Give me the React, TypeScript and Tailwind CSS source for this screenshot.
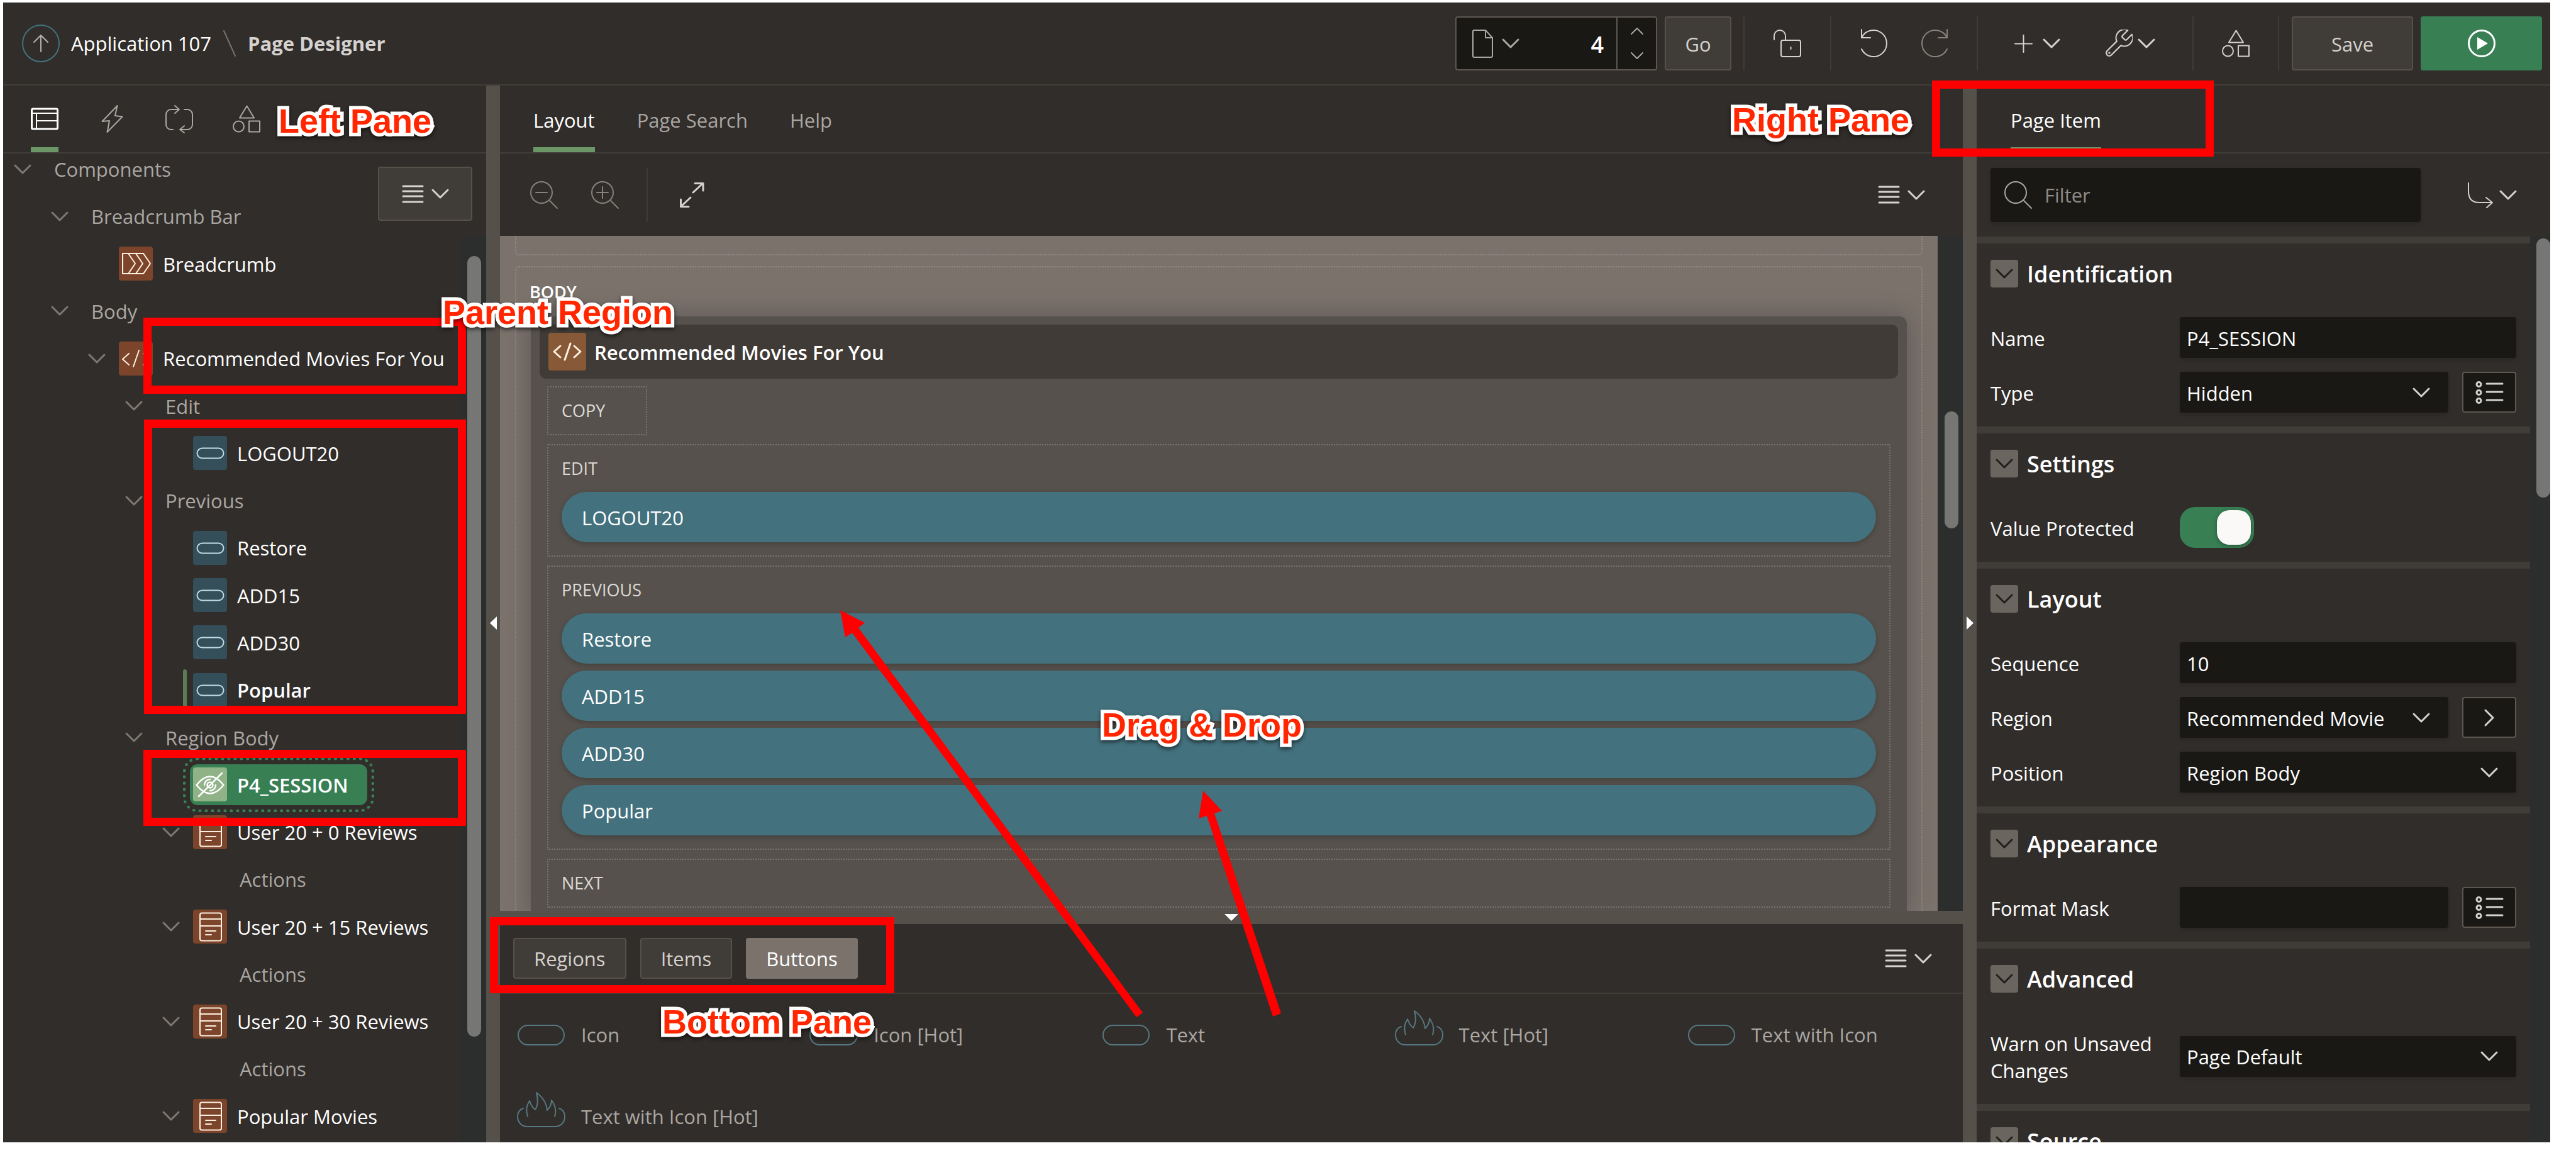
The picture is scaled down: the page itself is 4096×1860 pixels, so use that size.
import type { ReactNode } from "react";

/* ---------- icons ---------- */

type IconProps = { className?: string };

function Glyph({ w = 44, h = 44, sw = 2, className = "", children }: { w?: number; h?: number; sw?: number; className?: string; children: ReactNode }) {
  return (
    <svg width={w} height={h} viewBox={`0 0 ${w} ${h}`} fill="none" stroke="currentColor" strokeWidth={sw} strokeLinecap="round" strokeLinejoin="round" aria-hidden="true" className={`shrink-0 overflow-visible ${className}`}>
      {children}
    </svg>
  );
}

const Chevron = ({ className }: IconProps) => (
  <Glyph w={26} h={14} sw={3} className={className}><path d="M1 1l12 12L25 1" /></Glyph>
);
const SmallChevron = ({ up }: { up?: boolean }) => (
  <Glyph w={20} h={10} sw={2}><path d={up ? "M1 9l9-9 9 9" : "M1 1l9 9 9-9"} /></Glyph>
);
const ShapesIcon = ({ className }: IconProps) => (
  <Glyph className={className}>
    <path d="M22.500 1.500L11 20.500h23z" />
    <circle cx="9.500" cy="34" r="8.500" />
    <path d="M26 25.500h17v17H26z" />
  </Glyph>
);
const MenuIcon = () => (
  <span className="flex items-center gap-[14px]">
    <Glyph w={33} h={29} sw={3}><path d="M1 2h31M1 10h31M1 18h31M1 27h31" /></Glyph>
    <Chevron />
  </span>
);
const SearchGlyph = ({ kind, className }: { kind?: "in" | "out"; className?: string }) => (
  <Glyph className={className}>
    <circle cx="18" cy="18" r="17" />
    <path d="M31 31l12 12" />
    {kind && <path d="M9 18h18" />}
    {kind === "in" && <path d="M18 9v18" />}
  </Glyph>
);
const ListIcon = () => (
  <Glyph w={44} h={38} sw={3}>
    <circle cx="5.500" cy="6" r="3.500" /><circle cx="5.500" cy="19" r="3.500" /><circle cx="5.500" cy="32" r="3.500" />
    <path d="M18 5h25M18 18h25M18 31h25" />
  </Glyph>
);

type NodeKind = "breadcrumb" | "code" | "button" | "card" | "hidden";

const nodeTile: Record<NodeKind, string> = {
  breadcrumb: "bg-[#7c452b] text-[#fdf0e2]",
  code: "bg-[#7c452b] text-[#fdf0e2]",
  button: "bg-[#344f59] text-[#c3dde5]",
  card: "bg-[#7c452b] text-[#fdf0e2]",
  hidden: "bg-[#8fb287] text-white",
};

function NodeIcon({ kind }: { kind: NodeKind }) {
  return (
    <span className={`flex size-[54px] shrink-0 rounded-[4px] ${nodeTile[kind]}`}>
      <Glyph w={54} h={54} sw={kind === "hidden" ? 2.5 : 2}>
        {kind === "breadcrumb" && <path d="M6 11h33l11 16-11 16H6zM15 11l11 16-11 16M27 11l11 16-11 16" />}
        {kind === "code" && <path d="M16 19l-10 9 10 9M32 14l-9 26M39 19l10 9-10 9" />}
        {kind === "button" && <rect x="6.500" y="19.500" width="42" height="16" rx="8" />}
        {kind === "card" && <path d="M14 5.500h28a3 3 0 0 1 3 3v38a3 3 0 0 1-3 3H14a3 3 0 0 1-3-3v-38a3 3 0 0 1 3-3zM11 15h34M11 26h34M20 34h16M20 40h9" />}
        {kind === "hidden" && (
          <>
            <path d="M5.500 28Q27 1 48.500 28Q27 55 5.500 28z" />
            <path d="M46 9L9 46" />
            <circle cx="27" cy="28" r="4.500" />
            <path d="M18 28a9 9 0 0 1 9-9M36 28a9 9 0 0 1-9 9" />
          </>
        )}
      </Glyph>
    </span>
  );
}

function PaletteIcon({ hot }: { hot: boolean }) {
  return (
    <Glyph w={75} h={33} sw={2} className="text-[#557780]">
      {hot ? (
        <>
          <path d="M9 3C3 5 0 10 0 16c0 10 7 16 16 16h43c9 0 16-6 16-16 0-6-3-11-9-13" />
          <path d="M16 16C13 5 14-1 19-9c2 6 5 11 9 14 5-7 4-19 2-27 11 8 16 18 17 28 4-4 7-10 7-16 6 9 8 16 5 26" />
        </>
      ) : (
        <rect x="1" y="1" width="73" height="31" rx="15.500" />
      )}
    </Glyph>
  );
}

/* ---------- header ---------- */

const Rule = ({ className = "" }: { className?: string }) => <span className={`h-[86px] w-[2px] shrink-0 bg-[#403b37] ${className}`} />;

function Header() {
  return (
    <header className="flex h-[132px] shrink-0 items-center border-b-2 border-[#403c38] pl-[30px] pr-[13px]">
      <button aria-label="Up" className="flex size-[60px] items-center justify-center rounded-full border-2 border-[#43727f] text-[#b4b0ac]">
        <Glyph w={24} h={28}><path d="M12 27V1M1 12L12 1l11 11" /></Glyph>
      </button>
      <nav className="ml-[18px] flex items-center" aria-label="Breadcrumb">
        <a href="#app" className="font-medium text-white">Application 107</a>
        <Glyph w={20} h={42} className="mx-[19px] text-[#77726e]"><path d="M1 1l18 40" /></Glyph>
        <span className="font-bold text-[#d4d1ce]">Page Designer</span>
      </nav>
      <div className="ml-auto flex items-center text-[#d4d1ce]">
        <div className="flex h-[86px] w-[321px] items-center rounded-[4px] border-2 border-[#5d5752] bg-[#191815]">
          <button aria-label="Page finder" className="flex items-center gap-[15px] pl-[25px] text-[#aaa6a2]">
            <Glyph w={33} h={45}><path d="M3 1h18l11 12v29a2 2 0 0 1-2 2H3a2 2 0 0 1-2-2V3a2 2 0 0 1 2-2zM21 1v12h11" /></Glyph>
            <Chevron />
          </button>
          <input aria-label="Page number" defaultValue="4" className="h-full min-w-0 flex-1 bg-transparent pr-[20px] pt-[2px] text-right text-[36px] font-semibold text-white" />
          <div className="flex h-full w-[63px] flex-col items-center justify-center gap-[28px] border-l-2 border-[#5d5752] text-[#aaa6a2]">
            <button aria-label="Next page"><SmallChevron up /></button>
            <button aria-label="Previous page"><SmallChevron /></button>
          </div>
        </div>
        <button className="ml-[12px] h-[86px] w-[106px] rounded-[4px] border-2 border-[#56504b] bg-[#403c37] pt-[3px] font-medium">Go</button>
        <Rule className="ml-[19px]" />
        <button aria-label="Lock" className="mx-[46px]">
          <Glyph><rect x="12" y="17" width="31" height="26" rx="3" /><path d="M1 16V10a9 9 0 0 1 18 0v7M27.500 28v3" /></Glyph>
        </button>
        <Rule />
        <button aria-label="Undo" className="ml-[47px]"><Glyph w={43}><path d="M1 0v13h14M1 13A21 21 0 1 1 1 31" /></Glyph></button>
        <button aria-label="Redo" className="ml-[52px] text-[#87827d]"><Glyph w={43}><path d="M42 0v13H28M42 13A21 21 0 1 0 42 31" /></Glyph></button>
        <Rule className="ml-[46px]" />
        <button aria-label="Create" className="ml-[59px] flex items-center gap-[18px]">
          <Glyph w={27} h={27}><path d="M13.500 0v27M0 13.500h27" /></Glyph><Chevron />
        </button>
        <button aria-label="Utilities" className="ml-[72px] flex items-center gap-[9px]">
          <svg width="44" height="44" viewBox="2.200 2 19.600 20" fill="none" stroke="currentColor" strokeWidth="1" strokeLinejoin="round" aria-hidden="true">
            <path d="M14.700 6.300a1 1 0 0 0 0 1.400l1.600 1.600a1 1 0 0 0 1.400 0l3.770-3.770a6 6 0 0 1-7.940 7.940l-6.910 6.910a2.120 2.120 0 0 1-3-3l6.910-6.910a6 6 0 0 1 7.940-7.940l-3.760 3.760z" />
            <circle cx="5.200" cy="18.800" r=".3" />
          </svg>
          <Chevron />
        </button>
        <Rule className="ml-[60px]" />
        <button aria-label="Shared components" className="mx-[45px]"><ShapesIcon /></button>
        <Rule />
        <button className="ml-[20px] h-[86px] w-[193px] rounded-[4px] border-2 border-[#56504b] bg-[#403c37] pt-[3px] font-medium">Save</button>
        <button aria-label="Run page" className="ml-[12px] flex h-[86px] w-[193px] items-center justify-center rounded-[4px] bg-[#387f54] text-white">
          <Glyph sw={3}><circle cx="22" cy="22" r="20.500" /><path d="M15 12v20l17-10z" fill="currentColor" stroke="none" /></Glyph>
        </button>
      </div>
    </header>
  );
}

/* ---------- shared panes ---------- */

function TabStrip({ children, className = "" }: { children: ReactNode; className?: string }) {
  return <div role="tablist" className={`flex h-[108px] shrink-0 border-b-2 border-[#403c38] ${className}`}>{children}</div>;
}
function Tab({ active, label, children }: { active?: boolean; label?: string; children: ReactNode }) {
  return (
    <button role="tab" aria-selected={!!active} aria-label={label} className={active ? "flex items-center border-b-8 border-[#6b9766] pt-[8px] font-medium text-white" : "flex items-center text-[#aaa6a2]"}>
      {label ? children : <span className="pt-[5px]">{children}</span>}
    </button>
  );
}
function Splitter({ side }: { side: "left" | "right" }) {
  return (
    <div className="flex w-[22px] shrink-0 items-center justify-center bg-[#56504b]">
      <svg width="11" height="21" viewBox="0 0 11 21" className="mb-[-28px] fill-white" aria-hidden="true">
        <path d={side === "left" ? "M11 0v21L0 10.500z" : "M0 0v21l11-10.500z"} />
      </svg>
    </div>
  );
}

/* ---------- left pane ---------- */

type TreeNode = { label: string; level: number; kind?: NodeKind; leaf?: boolean; state?: "selected" | "marked" };

const tree: TreeNode[] = [
  { label: "Components", level: 0 },
  { label: "Breadcrumb Bar", level: 1 },
  { label: "Breadcrumb", level: 2, kind: "breadcrumb", leaf: true },
  { label: "Body", level: 1 },
  { label: "Recommended Movies For You", level: 2, kind: "code" },
  { label: "Edit", level: 3 },
  { label: "LOGOUT20", level: 4, kind: "button", leaf: true },
  { label: "Previous", level: 3 },
  { label: "Restore", level: 4, kind: "button", leaf: true },
  { label: "ADD15", level: 4, kind: "button", leaf: true },
  { label: "ADD30", level: 4, kind: "button", leaf: true },
  { label: "Popular", level: 4, kind: "button", leaf: true, state: "marked" },
  { label: "Region Body", level: 3 },
  { label: "P4_SESSION", level: 4, kind: "hidden", leaf: true, state: "selected" },
  { label: "User 20 + 0 Reviews", level: 4, kind: "card" },
  { label: "Actions", level: 5, leaf: true },
  { label: "User 20 + 15 Reviews", level: 4, kind: "card" },
  { label: "Actions", level: 5, leaf: true },
  { label: "User 20 + 30 Reviews", level: 4, kind: "card" },
  { label: "Actions", level: 5, leaf: true },
  { label: "Popular Movies", level: 4, kind: "card" },
];

const indent = ["pl-[18px]", "pl-[77px]", "pl-[136px]", "pl-[195px]", "pl-[254px]", "pl-[313px]"];

function TreeRow({ node }: { node: TreeNode }) {
  const { label, level, kind, leaf, state } = node;
  return (
    <li role="treeitem" aria-level={level + 1} aria-selected={state === "selected"} className={`flex min-h-0 flex-1 items-center whitespace-nowrap ${indent[level]}`}>
      <span className="flex w-[26px] shrink-0 text-[#7d7874]">{!leaf && <Chevron />}</span>
      {state === "marked" && <span className="-mr-[6px] ml-[6px] h-[65px] w-[6px] rounded-full bg-[#5e7a55]" />}
      {kind ? (
        <span className={state === "selected"
          ? "ml-[17px] flex h-[65px] items-center gap-[16px] rounded-[12px] bg-[#387f54] pl-[5px] pr-[30px] font-semibold text-white outline-[5px] outline-offset-[6px] outline-dotted outline-[#387f54]"
          : state === "marked" ? "ml-[16px] flex items-center gap-[16px] font-semibold text-white" : "ml-[22px] flex items-center gap-[16px] font-medium text-white"}>
          <NodeIcon kind={kind} />
          <span className="pt-[2px]">{label}</span>
        </span>
      ) : (
        <span className="ml-[37px] pt-[2px] text-[#aaa6a2]">{label}</span>
      )}
    </li>
  );
}

function LeftPane() {
  return (
    <aside className="flex w-[768px] shrink-0 flex-col">
      <TabStrip className="gap-[63px] pl-[44px]">
        <Tab active label="Rendering">
          <Glyph sw={3}><rect x="1.500" y="6" width="41" height="32" rx="2" /><path d="M1 13h42M9 13v25M9 25h34" strokeWidth="2" /></Glyph>
        </Tab>
        <Tab label="Dynamic Actions"><Glyph><path d="M30.500 1L27 17l11.500 1.500L14.500 43 18 25 6.500 26z" /></Glyph></Tab>
        <Tab label="Processing">
          <Glyph><path d="M12 39H9a8 8 0 0 1-8-8V15a8 8 0 0 1 8-8h13M15 1l7 6-7 6M30 7h5a8 8 0 0 1 8 8v16a8 8 0 0 1-8 8H23M30 33l-7 6 7 5" /></Glyph>
        </Tab>
        <Tab label="Page Shared Components"><ShapesIcon /></Tab>
      </TabStrip>
      <div className="relative flex min-h-0 flex-1 overflow-hidden">
        <ul role="tree" className="-mt-[13px] mb-[4px] flex flex-1 flex-col">
          {tree.map((node, i) => <TreeRow key={i} node={node} />)}
        </ul>
        <div className="mt-[131px] flex w-[40px] shrink-0 justify-center bg-[#2c2d2d]">
          <div className="mb-[168px] ml-[2px] mt-[32px] w-[22px] rounded-full bg-[#767675]" />
        </div>
        <button aria-label="Tree menu" className="absolute right-[22px] top-[21px] flex h-[86px] w-[150px] items-center justify-center rounded-[4px] border-2 border-[#56504b] bg-[#403c37] text-[#d4d1ce]">
          <MenuIcon />
        </button>
      </div>
    </aside>
  );
}

/* ---------- centre pane ---------- */

function Slot({ name, items = [], narrow }: { name: string; items?: string[]; narrow?: boolean }) {
  return (
    <section className={`rounded-[2px] border-2 border-dotted border-[#7b756f] px-[21px] ${items.length ? "pb-[21px]" : ""} ${narrow ? "w-[159px]" : ""}`}>
      <h3 className="text-[27px] leading-[74px] text-[#dcd9d6]">{name}</h3>
      <div className="flex flex-col gap-[11px]">
        {items.map((item) => (
          <button key={item} className="h-[80px] rounded-full bg-[#43717e] px-[32px] pt-[2px] text-left font-medium text-white shadow-[0_3px_8px_rgba(0,0,0,0.2)]">{item}</button>
        ))}
      </div>
    </section>
  );
}

function Canvas() {
  return (
    <div className="flex min-h-0 flex-1">
      <div className="flex min-w-0 flex-1 flex-col overflow-hidden bg-[#7b726c] px-[24px]">
        <div className="h-[31px] shrink-0 rounded-b-[6px] border-2 border-t-0 border-dotted border-[#918a85]" />
        <section className="mt-[17px] flex-1 shrink-0 rounded-t-[6px] border-2 border-b-0 border-dotted border-[#918a85] px-[23px] pt-[20px]">
          <h2 className="-ml-[2px] text-[27px] font-semibold leading-[38px] text-white">BODY</h2>
          <article className="mt-[20px] rounded-t-[12px] bg-[#56514c] px-[14px] pb-[14px] pt-[13px] shadow-[0_0_40px_rgba(0,0,0,0.25)]">
            <header className="flex h-[86px] items-center gap-[13px] rounded-[10px] bg-[#403b36] pl-[14px]">
              <span className="flex size-[60px] items-center justify-center rounded-[4px] bg-[#885936] text-[#fdf0e2]">
                <Glyph w={44} h={28} sw={3}><path d="M11 5L1 14l10 9M27 1l-9 26M33 5l10 9-10 9" /></Glyph>
              </span>
              <h3 className="pt-[2px] font-semibold text-white">Recommended Movies For You</h3>
            </header>
            <div className="mt-[12px] flex flex-col gap-[14px] px-[12px]">
              <Slot name="COPY" narrow />
              <Slot name="EDIT" items={["LOGOUT20"]} />
              <Slot name="PREVIOUS" items={["Restore", "ADD15", "ADD30", "Popular"]} />
              <Slot name="NEXT" />
            </div>
          </article>
        </section>
      </div>
      <div className="w-[40px] shrink-0 bg-[#2c2d2d] pl-[11px] pt-[279px]">
        <div className="h-[186px] w-[22px] rounded-full bg-[#767675]" />
      </div>
    </div>
  );
}

const palette = ["Icon", "Icon [Hot]", "Text", "Text [Hot]", "Text with Icon", "Text with Icon [Hot]"];

function CentrePane() {
  return (
    <main className="flex min-w-0 flex-1 flex-col">
      <TabStrip className="gap-[67px] pl-[53px]">
        <Tab active>Layout</Tab>
        <Tab>Page Search</Tab>
        <Tab>Help</Tab>
      </TabStrip>
      <div className="flex h-[131px] shrink-0 items-center pl-[48px] pr-[61px] text-[#d4d1ce]">
        <button aria-label="Zoom out" className="text-[#87827d]"><SearchGlyph kind="out" /></button>
        <button aria-label="Zoom in" className="ml-[53px] text-[#87827d]"><SearchGlyph kind="in" /></button>
        <Rule className="ml-[44px]" />
        <button aria-label="Expand" className="ml-[51px]">
          <Glyph w={38} h={40} sw={3}><path d="M21 16L36 2M24 1.500h13V13M17 24L2 38M1.500 27v11.500H14" /></Glyph>
        </button>
        <button aria-label="Layout menu" className="ml-auto"><MenuIcon /></button>
      </div>
      <Canvas />
      <div className="flex h-[21px] shrink-0 justify-center bg-[#56504b] pt-[5px]">
        <svg width="22" height="11" viewBox="0 0 22 11" className="fill-white" aria-hidden="true"><path d="M0 0h22L11 11z" /></svg>
      </div>
      <section className="flex h-[347px] shrink-0 flex-col overflow-hidden">
        <div className="flex h-[111px] shrink-0 items-center gap-[22px] border-b-2 border-[#403c38] pl-[21px] pr-[50px]">
          <button className="h-[65px] rounded-[4px] border-2 border-[#56504b] bg-[#403c37] px-[31px] pt-[2px] text-[#d4d1ce]">Regions</button>
          <button className="h-[65px] rounded-[4px] border-2 border-[#56504b] bg-[#403c37] px-[31px] pt-[2px] text-[#d4d1ce]">Items</button>
          <button className="h-[65px] rounded-[4px] bg-[#7b726c] px-[32px] pt-[2px] text-white">Buttons</button>
          <button aria-label="Gallery menu" className="ml-auto text-[#d4d1ce]"><MenuIcon /></button>
        </div>
        <ul className="grid shrink-0 grid-cols-5 text-[#aaa6a2]">
          {palette.map((name) => (
            <li key={name} className="flex h-[130px] items-center gap-[26px] whitespace-nowrap pl-[28px]">
              <PaletteIcon hot={name.includes("Hot")} />
              {name}
            </li>
          ))}
        </ul>
      </section>
    </main>
  );
}

/* ---------- right pane ---------- */

const fieldBox = "h-[65px] w-full min-w-0 rounded-[4px] bg-[#191815] px-[11px] pt-[3px] font-medium text-white shadow-[0_3px_6px_rgba(0,0,0,0.15)]";

function Section({ title, children }: { title: string; children?: ReactNode }) {
  return (
    <section className="shrink-0 border-t-[11px] border-[#403c37] px-[22px] pb-[22px] pt-[26px]">
      <h2 className="flex h-[44px] items-center gap-[14px] text-[36px] font-semibold leading-[44px] text-white">
        <button aria-label={`Collapse ${title}`} className="flex size-[44px] items-center justify-center rounded-[4px] bg-[#6a665f] text-[#211f1c]"><Chevron /></button>
        <span className="pt-[2px]">{title}</span>
      </h2>
      <div className="mt-[47px] flex flex-col gap-[22px]">{children}</div>
    </section>
  );
}

function Field({ id, label, children, action }: { id: string; label: string; children: ReactNode; action?: ReactNode }) {
  return (
    <div className="flex items-center">
      <label htmlFor={id} className="w-[301px] shrink-0 pb-[9px] pr-[30px] pt-[13px] font-medium leading-[43px] text-white">{label}</label>
      <div className="flex min-w-0 flex-1 gap-[22px]">
        {children}
        {action}
      </div>
    </div>
  );
}

function Select({ id, value }: { id: string; value: string }) {
  return (
    <span className="relative flex min-w-0 flex-1 items-center">
      <select id={id} className={`${fieldBox} appearance-none`}><option>{value}</option></select>
      <Chevron className="pointer-events-none absolute right-[30px] text-[#d4d1ce]" />
    </span>
  );
}

function SideButton({ label, children }: { label: string; children: ReactNode }) {
  return <button aria-label={label} className="flex h-[65px] w-[86px] shrink-0 items-center justify-center rounded-[4px] border-2 border-[#5d5752] bg-[#191815] text-[#d4d1ce]">{children}</button>;
}

function RightPane() {
  return (
    <aside className="flex w-[912px] shrink-0 flex-col">
      <TabStrip className="pl-[54px]"><Tab active>Page Item</Tab></TabStrip>
      <div className="flex h-[132px] shrink-0 items-center pl-[22px] pr-[54px] text-[#d4d1ce]">
        <label className="flex h-[86px] w-[684px] items-center gap-[20px] rounded-[4px] bg-[#191815] pl-[22px] text-[#8f8b87] shadow-[0_3px_6px_rgba(0,0,0,0.15)]">
          <SearchGlyph className="text-[#aaa6a2]" />
          <input aria-label="Filter" placeholder="Filter" className="min-w-0 flex-1 bg-transparent placeholder:text-[#8f8b87]" />
        </label>
        <button aria-label="Go to group" className="ml-auto flex items-center gap-[11px]">
          <Glyph w={40} h={40}><path d="M1 1v13q0 18 17 18h21M29 24l10 8-9 8" /></Glyph><Chevron />
        </button>
      </div>
      <div className="flex min-h-0 flex-1">
        <div className="flex min-w-0 flex-1 flex-col overflow-hidden">
          <Section title="Identification">
            <Field id="name" label="Name"><input id="name" defaultValue="P4_SESSION" className={fieldBox} /></Field>
            <Field id="type" label="Type" action={<SideButton label="Type list"><ListIcon /></SideButton>}><Select id="type" value="Hidden" /></Field>
          </Section>
          <Section title="Settings">
            <Field id="protected" label="Value Protected">
              <input id="protected" type="checkbox" role="switch" defaultChecked className="relative h-[65px] w-[118px] appearance-none rounded-[24px] bg-[#387f54] before:absolute before:right-[5px] before:top-[5px] before:h-[55px] before:w-[54px] before:rounded-[20px] before:bg-[#fbf9f8] before:shadow-[0_2px_6px_rgba(0,0,0,0.35)] before:content-['']" />
            </Field>
          </Section>
          <Section title="Layout">
            <Field id="sequence" label="Sequence"><input id="sequence" defaultValue="10" className={fieldBox} /></Field>
            <Field id="region" label="Region" action={<SideButton label="Go to region"><Glyph w={14} h={26} sw={3}><path d="M1 1l12 12L1 25" /></Glyph></SideButton>}><Select id="region" value="Recommended Movie" /></Field>
            <Field id="position" label="Position"><Select id="position" value="Region Body" /></Field>
          </Section>
          <Section title="Appearance">
            <Field id="mask" label="Format Mask" action={<SideButton label="Format mask list"><ListIcon /></SideButton>}><input id="mask" className={fieldBox} /></Field>
          </Section>
          <Section title="Advanced">
            <Field id="warn" label="Warn on Unsaved Changes"><Select id="warn" value="Page Default" /></Field>
          </Section>
          <Section title="Source" />
        </div>
        <div className="w-[32px] shrink-0 bg-[#2c2d2d] pl-[10px] pt-[3px]">
          <div className="h-[412px] w-[22px] rounded-full bg-[#767675]" />
        </div>
      </div>
    </aside>
  );
}

/* ---------- call-outs drawn over the window ---------- */

const frames = [
  "left-[228px] top-[505px] h-[121px] w-[513px]",
  "left-[229px] top-[667px] h-[468px] w-[512px]",
  "left-[228px] top-[1192px] h-[121px] w-[513px]",
  "left-[3072px] top-[128px] h-[121px] w-[448px]",
  "left-[779px] top-[1458px] h-[121px] w-[643px]",
];

const notes = [
  { text: "Left Pane", at: "left-[443px] top-[162px]" },
  { text: "Parent Region", at: "left-[704px] top-[466px]" },
  { text: "Right Pane", at: "left-[2754px] top-[160px]" },
  { text: "Bottom Pane", at: "left-[1053px] top-[1594px]" },
  { text: "Drag & Drop", at: "left-[1752px] top-[1122px]" },
];

function Annotations() {
  return (
    <div className="pointer-events-none absolute inset-0">
      {frames.map((f) => <div key={f} className={`absolute border-[13px] border-[#ff0000] ${f}`} />)}
      <svg className="absolute inset-0 size-full" fill="#ff0000" aria-hidden="true">
        <path d="M1336 970L1375 990L1365 998L1817 1610L1807 1617L1355 1006L1344 1013z" />
        <path d="M1913 1257L1943 1289L1931 1293L2037 1611L2024 1616L1919 1297L1906 1301z" />
      </svg>
      {notes.map((n) => (
        <p key={n.text} className={`absolute whitespace-nowrap font-['Liberation_Sans',Arial,sans-serif] text-[54px] font-bold leading-[60px] text-[#ff2600] drop-shadow-[0_3px_3px_rgba(0,0,0,0.6)] [-webkit-text-stroke:11px_white] [paint-order:stroke_fill] [stroke-linejoin:round] ${n.at}`}>{n.text}</p>
      ))}
    </div>
  );
}

export default function App() {
  return (
    <div className="relative h-screen overflow-hidden bg-white pb-[44px] pl-[5px] pr-[41px] pt-[4px] font-['Open_Sans','Noto_Sans',sans-serif] text-[31px] leading-[43px]">
      <div className="flex h-full flex-col bg-[#312d2a]">
        <Header />
        <div className="flex min-h-0 flex-1">
          <LeftPane />
          <Splitter side="left" />
          <CentrePane />
          <Splitter side="right" />
          <RightPane />
        </div>
      </div>
      <Annotations />
    </div>
  );
}
